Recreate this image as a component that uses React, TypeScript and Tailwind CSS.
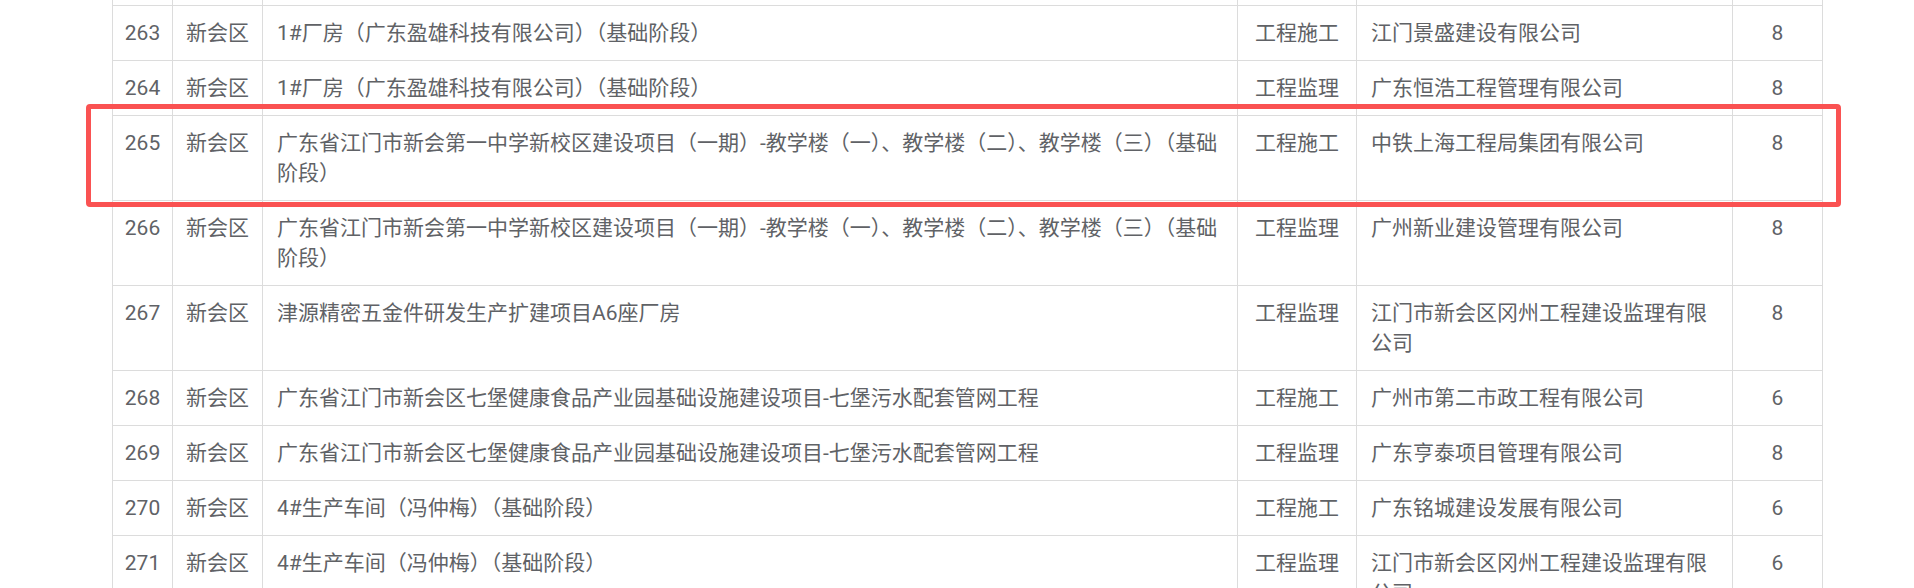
const rows = [
  { no: 263, area: '新会区', name: '1#厂房（广东盈雄科技有限公司）（基础阶段）', type: '工程施工', company: '江门景盛建设有限公司', score: 8 },
  { no: 264, area: '新会区', name: '1#厂房（广东盈雄科技有限公司）（基础阶段）', type: '工程监理', company: '广东恒浩工程管理有限公司', score: 8 },
  { no: 265, area: '新会区', name: '广东省江门市新会第一中学新校区建设项目（一期）-教学楼（一）、教学楼（二）、教学楼（三）（基础阶段）', type: '工程施工', company: '中铁上海工程局集团有限公司', score: 8 },
  { no: 266, area: '新会区', name: '广东省江门市新会第一中学新校区建设项目（一期）-教学楼（一）、教学楼（二）、教学楼（三）（基础阶段）', type: '工程监理', company: '广州新业建设管理有限公司', score: 8 },
  { no: 267, area: '新会区', name: '津源精密五金件研发生产扩建项目A6座厂房', type: '工程监理', company: '江门市新会区冈州工程建设监理有限公司', score: 8 },
  { no: 268, area: '新会区', name: '广东省江门市新会区七堡健康食品产业园基础设施建设项目-七堡污水配套管网工程', type: '工程施工', company: '广州市第二市政工程有限公司', score: 6 },
  { no: 269, area: '新会区', name: '广东省江门市新会区七堡健康食品产业园基础设施建设项目-七堡污水配套管网工程', type: '工程监理', company: '广东亨泰项目管理有限公司', score: 8 },
  { no: 270, area: '新会区', name: '4#生产车间（冯仲梅）（基础阶段）', type: '工程施工', company: '广东铭城建设发展有限公司', score: 6 },
  { no: 271, area: '新会区', name: '4#生产车间（冯仲梅）（基础阶段）', type: '工程监理', company: '江门市新会区冈州工程建设监理有限公司', score: 6 },
]

// left aligned text cells and centered cells
const textCell = 'border border-[#dcdcdc] px-[14px] py-[12px] align-top'
const midCell = 'border border-[#dcdcdc] py-[12px] align-top text-center whitespace-nowrap'

export default function App() {
  return (
    <div className="h-[588px] w-full overflow-hidden bg-white font-['Roboto','Noto_Sans_CJK_SC',sans-serif] text-[21px] leading-[30px] text-[#606266]">
      <div className="relative pl-[112px]">
        <table className="w-[1710px] table-fixed border-collapse">
          <colgroup>
            <col className="w-[60px]" />
            <col className="w-[90px]" />
            <col className="w-[975px]" />
            <col className="w-[119px]" />
            <col className="w-[376px]" />
            <col className="w-[90px]" />
          </colgroup>
          <tbody>
            <tr className="h-[5px]">
              {[0, 1, 2, 3, 4, 5].map(i => (
                <td key={i} className="border border-t-0 border-[#dcdcdc] p-0" />
              ))}
            </tr>
            {rows.map(r => (
              <tr key={r.no}>
                <td className={midCell}>{r.no}</td>
                <td className={midCell}>{r.area}</td>
                <td className={textCell}>{r.name}</td>
                <td className={midCell}>{r.type}</td>
                <td className={textCell}>{r.company}</td>
                <td className={midCell}>{r.score}</td>
              </tr>
            ))}
          </tbody>
        </table>
        <div className="pointer-events-none absolute left-[86px] top-[104px] h-[103px] w-[1755px] rounded-[4px] border-[5px] border-[#fa5252]" />
      </div>
    </div>
  )
}
